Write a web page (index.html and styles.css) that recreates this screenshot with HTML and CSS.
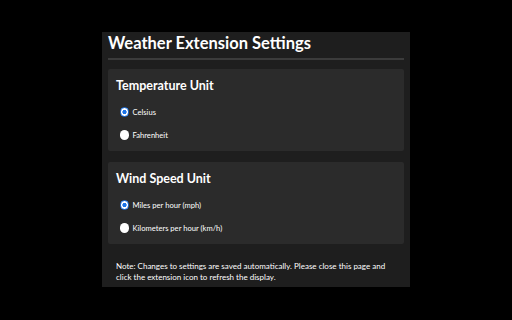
FILE: index.html
```html
<!DOCTYPE html>
<html>
<head>
<meta charset="utf-8">
<link rel="stylesheet" href="styles.css">
</head>
<body>
<main class="panel">
  <h1 class="title">Weather Extension Settings</h1>
  <section class="card">
    <h2 class="card-title">Temperature Unit</h2>
    <label class="option"><input type="radio" name="temp" checked><span>Celsius</span></label>
    <label class="option"><input type="radio" name="temp"><span>Fahrenheit</span></label>
  </section>
  <section class="card">
    <h2 class="card-title">Wind Speed Unit</h2>
    <label class="option"><input type="radio" name="wind" checked><span>Miles per hour (mph)</span></label>
    <label class="option"><input type="radio" name="wind"><span>Kilometers per hour (km/h)</span></label>
  </section>
  <p class="note">Note: Changes to settings are saved automatically. Please close this page and click the extension icon to refresh the display.</p>
</main>
</body>
</html>
```
FILE: styles.css
```css
html, body {
  margin: 0;
  padding: 0;
  background: #000;
  height: 100%;
}
body {
  font-family: "Lato", "Noto Sans", sans-serif;
  color: #fff;
}
.panel {
  width: 296px;
  margin: 32px auto 0;
  padding: 0 6px;
  height: 255px;
  background: #1e1e1e;
  box-sizing: content-box;
  display: flex;
  flex-direction: column;
}
.title {
  margin: 0;
  padding: 2px 0 4px;
  font-size: 16.5px;
  line-height: 19.5px;
  font-weight: 700;
  border-bottom: 2px solid #3b3b3b;
}
.card {
  background: #2b2b2b;
  border-radius: 2px;
  margin: 9.5px 0 0;
  padding: 8.9px 8px 4.5px;
  height: 82px;
  box-sizing: border-box;
  display: flex;
  flex-direction: column;
}
.card + .card {
  margin-top: 11px;
}
.card-title {
  margin: 0 0 6.8px;
  font-size: 12.5px;
  line-height: 15.5px;
  font-weight: 700;
}
.option {
  display: flex;
  align-items: center;
  gap: 3.5px;
  height: 23.3px;
  font-size: 7.6px;
  padding-left: 3.5px;
}
.option input {
  appearance: none;
  -webkit-appearance: none;
  width: 9.5px;
  height: 9.5px;
  margin: 0;
  border-radius: 50%;
  background: #fff;
  box-sizing: border-box;
  flex: none;
}
.option input:checked {
  border: 1.6px solid #1a73e8;
  background: radial-gradient(circle, #1a73e8 0 1.9px, #fff 2.3px);
}
.note {
  margin: 17px 0 0;
  padding: 0 8px;
  font-size: 8px;
  line-height: 10.7px;
}
```
